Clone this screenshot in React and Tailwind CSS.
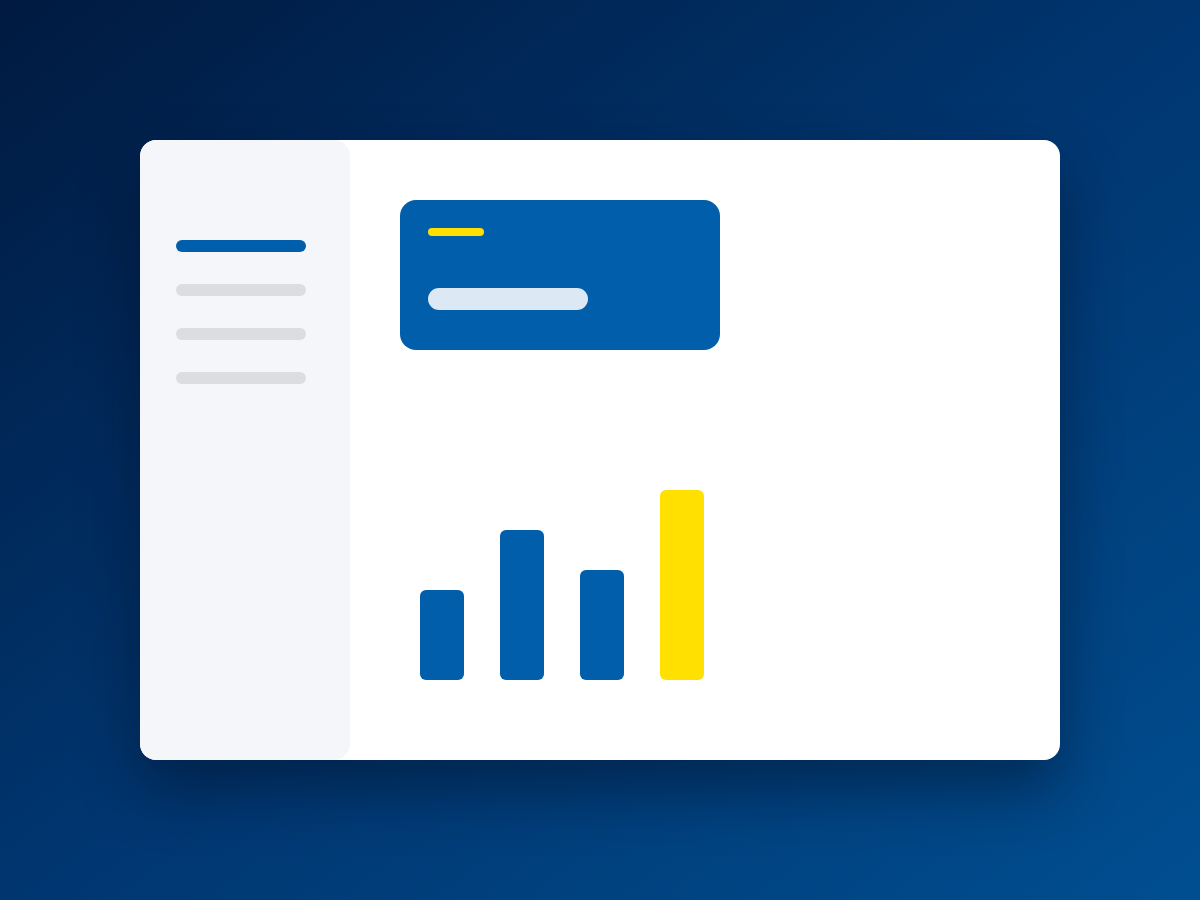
import React from 'react'

const bars = [
  { h: 'h-[90px]', color: 'bg-[#005eaa]' },
  { h: 'h-[150px]', color: 'bg-[#005eaa]' },
  { h: 'h-[110px]', color: 'bg-[#005eaa]' },
  { h: 'h-[190px]', color: 'bg-[#ffe000]' },
]

export default function App() {
  return (
    <div className="w-[1200px] h-[900px] bg-gradient-to-br from-[#001a40] via-[#003670] to-[#004e90] flex items-start justify-center pt-[140px]">
      {/* window */}
      <div className="w-[920px] h-[620px] bg-white rounded-2xl shadow-[0_30px_60px_rgba(0,10,30,0.45)] flex overflow-hidden">
        {/* sidebar */}
        <div className="w-[210px] h-full bg-[#f5f6fa] rounded-2xl flex flex-col gap-8 pl-9 pt-[100px]">
          <div className="w-[130px] h-3 rounded-full bg-[#005eaa]" />
          <div className="w-[130px] h-3 rounded-full bg-[#dcdde0]" />
          <div className="w-[130px] h-3 rounded-full bg-[#dcdde0]" />
          <div className="w-[130px] h-3 rounded-full bg-[#dcdde0]" />
        </div>

        {/* main */}
        <div className="flex-1 flex flex-col pl-[50px] pt-[60px]">
          <div className="w-[320px] h-[150px] rounded-2xl bg-[#005eaa] px-7 pt-7 flex flex-col">
            <div className="w-14 h-2 rounded-full bg-[#ffe000]" />
            <div className="w-40 h-[22px] rounded-full bg-[#dce8f3] mt-[52px]" />
          </div>

          <div className="h-[330px] flex items-end gap-9 pl-5">
            {bars.map((b, i) => (
              <div key={i} className={`w-11 rounded-md ${b.h} ${b.color}`} />
            ))}
          </div>
        </div>
      </div>
    </div>
  )
}
